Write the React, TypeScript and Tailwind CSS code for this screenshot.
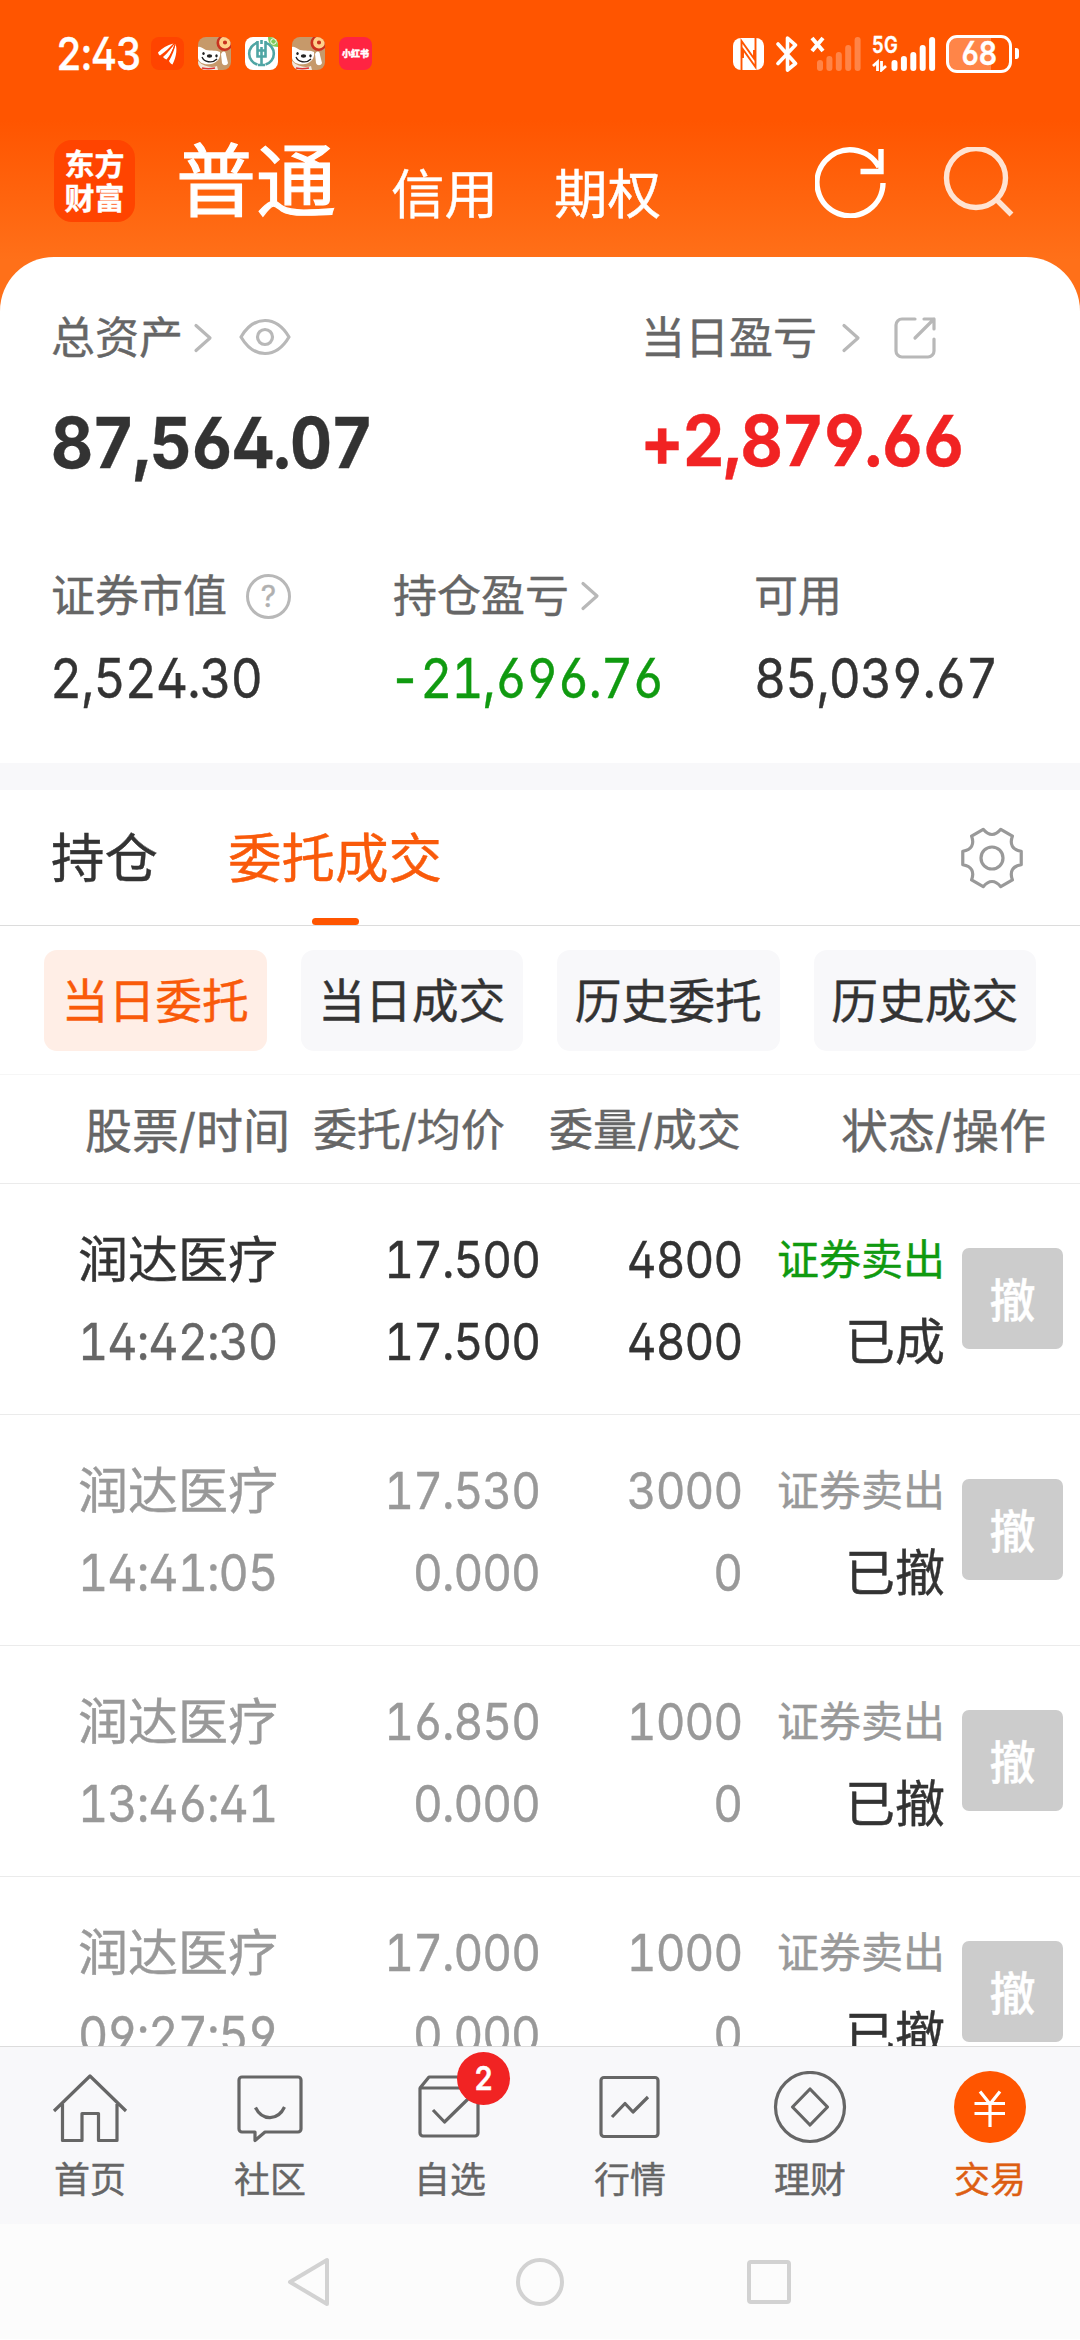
import type { ReactNode } from "react";

function Num({ children, className = "" }: { children: ReactNode; className?: string }) {
  return (
    <span
      className={`inline-block whitespace-nowrap [font-feature-settings:'cv02','cv03','cv04','tnum'] ${className}`}
    >
      {children}
    </span>
  );
}

function Chevron() {
  return (
    <svg className="h-[30px] w-[20px] shrink-0" viewBox="0 0 20 30" fill="none" stroke="#b8b8b8" strokeWidth="3.2" strokeLinecap="round" strokeLinejoin="round">
      <path d="M3 2.5 17 15 3 27.5" />
    </svg>
  );
}

function DogIcon() {
  return (
    <svg className="size-[33px] shrink-0 rounded-[8px]" viewBox="0 0 33 33">
      <rect width="33" height="33" fill="#c6996a" />
      <path d="M0 10C3 9 5 12 8 13 13 14 19 13 22 15c1 6-3 11-9 12C6 28 1 26 0 21Z" fill="#fff" />
      <path d="M23 17c2-4 5-3 5 1l2 8c-1 3-5 3-6 0Z" fill="#fff" />
      <path d="M0 24c6 6 14 7 19 5l1 4H0Z" fill="#f1e6dc" />
      <path d="M4 20c2 5 10 7 15 2" fill="none" stroke="#222" strokeWidth="1.3" />
      <path d="M4 31c4 1 8 1 13 0" stroke="#d33" strokeWidth="1.600" fill="none" />
      <ellipse cx="11.500" cy="19" rx="2.700" ry="1.700" fill="#222" />
      <ellipse cx="5.500" cy="16.500" rx="1.200" ry="1.600" fill="#222" />
      <ellipse cx="18.500" cy="18.800" rx="1.200" ry="1.600" fill="#222" />
      <circle cx="26.500" cy="6" r="8" fill="#c9321f" />
      <circle cx="27" cy="5.500" r="4" fill="none" stroke="#ffd08a" strokeWidth="3.800" />
    </svg>
  );
}

function Bars({ opacity }: { opacity: number }) {
  return (
    <g fill="#fff" opacity={opacity}>
      <rect x="0" y="24" width="6" height="11" rx="3" />
      <rect x="9.400" y="20" width="6" height="15" rx="3" />
      <rect x="18.800" y="16" width="6" height="19" rx="3" />
      <rect x="28.200" y="9" width="6" height="26" rx="3" />
      <rect x="37.600" y="1" width="6" height="34" rx="3" />
    </g>
  );
}

function StatusBar() {
  return (
    <div className="flex h-[107px] items-center pl-[56px] pr-[61px] text-white">
      <div className="w-[95px] text-[45px] font-medium leading-none">
        <Num className="origin-left scale-x-[.89] tracking-[-1px]">2:43</Num>
      </div>
      <div className="flex gap-[14px]">
        <svg className="size-[33px] rounded-[8px]" viewBox="0 0 33 33">
          <rect width="33" height="33" fill="#ff4400" />
          <path d="M7 15.500C11 11 16 8 22.500 6.500 18 11 14 15 9 18.500 8 18 7.500 17 7 15.500Z" fill="#fff" />
          <path d="M12 20C17 15.500 20.500 11 23.500 7 22 13 19 18.500 15.500 22.500 14 22 13 21 12 20Z" fill="#fff" />
          <path d="M18 24C21.500 18 23.500 12.500 24.500 7 26 11 26 19 21.500 27.500 20 27 19 26 18 24Z" fill="#fff" />
          <path d="m11.500 19.500 11.500-12.500M17.300 23.500 24 8" stroke="#ff4400" strokeWidth="1" />
        </svg>
        <DogIcon />
        <svg className="size-[33px] rounded-[8px]" viewBox="0 0 33 33" fill="none">
          <rect width="33" height="33" fill="#fff" />
          <path d="M23 0h10v10c-6 0-10-3-10-10Z" fill="#7fca5a" />
          <circle cx="28.500" cy="4.500" r="2.800" stroke="#fff" />
          <path d="M12.500 5.800a11.300 11.300 0 0 0 0 21.800M20.500 5.800a11.300 11.300 0 0 1 0 21.800" stroke="#4fa5a4" strokeWidth="2.600" />
          <path d="M16.500 10v18M12.500 4v15.500h8V4M12.500 13.500h8M16.500 3v4M13 28h7" stroke="#4fa5a4" strokeWidth="2.600" />
        </svg>
        <DogIcon />
        <div className="flex size-[33px] items-center justify-center rounded-[8px] bg-[#ff2442]">
          <span className="whitespace-nowrap text-[9px] font-black leading-none">小红书</span>
        </div>
      </div>
      <div className="ml-auto flex items-center">
        <svg className="h-[34px] w-[31px]" viewBox="0 0 31 34">
          <rect x="0" y="1" width="31" height="32" rx="8" fill="#fff" />
          <path d="M8.500 34V4L21 21.500V13M22.500 0v30L10 12.500V21" fill="none" stroke="#ff5500" strokeWidth="1.900" />
        </svg>
        <svg className="ml-[12px] h-[36px] w-[22px]" viewBox="0 0 22 36" fill="none" stroke="#fff" strokeWidth="3.600" strokeLinejoin="round" strokeLinecap="round">
          <path d="M2 8 19.500 27.500 11.500 34V2l8 7L2 27.500" />
        </svg>
        <svg className="ml-[12px] h-[36px] w-[52px]" viewBox="0 0 52 36">
          <path d="m2 2 11 13M13 2 2 15" stroke="#fff" strokeWidth="4" />
          <g transform="translate(7 0)">
            <Bars opacity={0.28} />
          </g>
        </svg>
        <div className="relative ml-[10px] h-[36px] w-[64px]">
          <svg className="h-[36px] w-[64px]" viewBox="0 0 64 36">
            <path d="M5.500 35V26L1 30M9.500 25v9l4.500-4" stroke="#fff" strokeWidth="2.800" fill="none" />
            <g transform="translate(19.500 0)">
              <Bars opacity={1} />
            </g>
          </svg>
          <Num className="absolute left-0 top-0 origin-left scale-x-[.8] text-[23px] font-semibold leading-[18px]">5G</Num>
        </div>
        <div className="ml-[10px] flex h-[38px] w-[66px] items-center justify-center rounded-[11px] border-[3px] border-white bg-[linear-gradient(to_right,#ff8548_70%,transparent_70%)] text-[33px] font-semibold leading-none">
          <Num className="scale-x-[.86] tracking-[-0.5px]">68</Num>
        </div>
        <div className="ml-[3px] h-[11px] w-[4px] rounded-r-[3px] bg-white" />
      </div>
    </div>
  );
}

function Header() {
  return (
    <div className="flex h-[150px] items-start pl-[54px] pr-[65px] text-white">
      <div className="mt-[33px] grid h-[82px] w-[81px] place-content-center rounded-[18px] bg-[#ff4400] text-center text-[30px] font-bold leading-[34px]">
        <span>东方</span>
        <span>财富</span>
      </div>
      <span className="ml-[41px] mt-[34px] w-[162px] whitespace-nowrap text-[80px] leading-[80px] [-webkit-text-stroke:1.2px]">普通</span>
      <span className="ml-[53px] mt-[61px] w-[108px] text-[53.500px] leading-[54px]">信用</span>
      <span className="ml-[55px] mt-[61px] w-[108px] text-[53.500px] leading-[54px]">期权</span>
      <svg className="ml-auto mt-[39px] h-[72px] w-[72px]" viewBox="0 0 72 72" fill="none" stroke="#fff" strokeWidth="5.400">
        <path d="M68 37A33 33 0 1 1 64 21M45.500 25.500H66V3" />
      </svg>
      <svg className="ml-[56px] mt-[40px] h-[72px] w-[72px]" viewBox="0 0 72 72" fill="none" stroke="#ffe3d2" strokeWidth="5.400">
        <circle cx="33" cy="31" r="29.500" />
        <path d="m53 52 15.500 15.500" />
      </svg>
    </div>
  );
}

function Assets() {
  return (
    <section className="h-[506px] rounded-t-[54px] bg-white text-[#333]">
      <div className="flex h-[243px] pl-[51px]">
        <div className="w-[590px]">
          <div className="mt-[59px] flex h-[44px] items-center text-[44px] leading-none text-[#666]">
            总资产
            <div className="ml-[10px]"><Chevron /></div>
            <svg className="mb-[2px] ml-[26px] h-[38px] w-[52px]" viewBox="0 0 52 38" fill="none" stroke="#b8b8b8" strokeWidth="3.200">
              <path d="M2 19C15-3 37-3 50 19 37 41 15 41 2 19Z" strokeLinejoin="round" />
              <circle cx="26" cy="19" r="7.500" />
            </svg>
          </div>
          <div className="mt-[49px] text-[70px] font-bold leading-[68px]">
            <Num className="origin-left scale-x-[.93] tracking-[-1px]">87,564.07</Num>
          </div>
        </div>
        <div>
          <div className="mt-[59px] flex h-[44px] items-center text-[44px] leading-none text-[#666]">
            当日盈亏
            <div className="ml-[24px]"><Chevron /></div>
            <svg className="ml-[32px] h-[44px] w-[44px]" viewBox="0 0 44 44" fill="none" stroke="#b8b8b8" strokeWidth="3.200" strokeLinecap="round" strokeLinejoin="round">
              <path d="M22 3H9a6 6 0 0 0-6 6v26a6 6 0 0 0 6 6h26a6 6 0 0 0 6-6V23M31 3h10v10M41 3 22 22" />
            </svg>
          </div>
          <div className="mt-[47px] text-[70px] font-bold leading-[68px] text-[#f12323]">
            <Num className="origin-left scale-x-[.935] tracking-[-1px]">+2,879.66</Num>
          </div>
        </div>
      </div>
      <div className="flex pl-[51px] pt-[74px]">
        <div className="w-[342px]">
          <div className="flex h-[44px] items-center text-[44px] leading-none text-[#666]">
            证券市值
            <div className="ml-[19px] flex size-[45px] items-center justify-center rounded-full border-[3px] border-[#b8b8b8] text-[30px] leading-none text-[#b0b0b0]">?</div>
          </div>
          <div className="mt-[32px] text-[55px] leading-[56px]"><Num className="-ml-px origin-left scale-x-[.9] tracking-[-1px]">2,524.30</Num></div>
        </div>
        <div className="w-[361px]">
          <div className="flex h-[44px] items-center text-[44px] leading-none text-[#666]">
            持仓盈亏
            <div className="ml-[11px]"><Chevron /></div>
          </div>
          <div className="mt-[32px] text-[55px] leading-[56px] text-[#109a10]"><Num className="-ml-[4px] origin-left scale-x-[.9] tracking-[-1px]">-21,696.76</Num></div>
        </div>
        <div>
          <div className="flex h-[44px] items-center text-[44px] leading-none text-[#666]">可用</div>
          <div className="mt-[32px] text-[55px] leading-[56px]"><Num className="origin-left scale-x-[.9] tracking-[-1px]">85,039.67</Num></div>
        </div>
      </div>
    </section>
  );
}

function gearPath() {
  const at = (deg: number, r: number) => {
    const a = (deg * Math.PI) / 180;
    return `${(33 + r * Math.cos(a)).toFixed(2)} ${(33 + r * Math.sin(a)).toFixed(2)}`;
  };
  let d = `M${at(-13, 30)}`;
  for (let i = 0; i < 6; i++) {
    const c = i * 60;
    d += `L${at(c + 13, 30)}C${at(c + 22, 22)} ${at(c + 38, 22)} ${at(c + 47, 30)}`;
  }
  return d + "Z";
}

const filters = ["当日委托", "当日成交", "历史委托", "历史成交"];

function Tabs() {
  return (
    <>
      <div className="flex h-[136px] items-center border-b border-[#dcdcdc] pl-[51px] pr-[55px] text-[53.500px] leading-none text-[#333]">
        <span className="pt-[3px]">持仓</span>
        <div className="relative ml-[70px] flex h-full items-center pt-[3px] text-[#f95a0a]">
          委托成交
          <div className="absolute bottom-0 left-[84px] h-[7px] w-[47px] rounded-full bg-[#ff5500]" />
        </div>
        <svg className="ml-auto size-[66px]" viewBox="0 0 66 66" fill="none" stroke="#999" strokeWidth="3.200" strokeLinejoin="round">
          <path d={gearPath()} />
          <circle cx="33" cy="33" r="11" />
        </svg>
      </div>
      <div className="flex h-[149px] gap-[34px] border-b border-[#f6f6f6] pl-[44px] pt-[24px]">
        {filters.map((f, i) => (
          <div
            key={f}
            className={`flex h-[101px] w-[222.500px] items-center justify-center rounded-[13px] pt-[2px] text-[46.800px] leading-none ${
              i === 0 ? "bg-[#ffeee6] text-[#f95a0a]" : "bg-[#f8f8fa] text-[#333]"
            }`}
          >
            {f}
          </div>
        ))}
      </div>
    </>
  );
}

const orders = [
  { time: "14:42:30", price: "17.500", avg: "17.500", qty: "4800", done: "4800", state: "已成", active: true },
  { time: "14:41:05", price: "17.530", avg: "0.000", qty: "3000", done: "0", state: "已撤", active: false },
  { time: "13:46:41", price: "16.850", avg: "0.000", qty: "1000", done: "0", state: "已撤", active: false },
  { time: "09:27:59", price: "17.000", avg: "0.000", qty: "1000", done: "0", state: "已撤", active: false },
];

function Orders() {
  return (
    <div className="h-[971px] overflow-hidden">
      <div className="flex h-[109px] items-center border-b border-[#ebebeb] pl-[85px] pt-[2px] leading-none text-[#666]">
        <span className="w-[228px] text-[47px]">股票/时间</span>
        <span className="w-[236px] text-[44px]">委托/均价</span>
        <span className="w-[292px] text-[44px]">委量/成交</span>
        <span className="text-[47px]">状态/操作</span>
      </div>
      {orders.map((o) => (
        <div key={o.time} className={`flex h-[231px] border-b border-[#ebebeb] pl-[78px] text-[51px] leading-[52px] ${o.active ? "text-[#333]" : "text-[#999]"}`}>
          <div className="w-[201px] pt-[50px]">
            <div className="text-[50px]">润达医疗</div>
            <div className={`mt-[30px] ${o.active ? "text-[#666]" : ""}`}><Num className="origin-left scale-x-[.915] tracking-[-1px]">{o.time}</Num></div>
          </div>
          <div className="w-[261px] pt-[50px] text-right">
            <div><Num className="origin-right scale-x-[.9] tracking-[-1px]">{o.price}</Num></div>
            <div className="mt-[30px]"><Num className="origin-right scale-x-[.9] tracking-[-1px]">{o.avg}</Num></div>
          </div>
          <div className="w-[202px] pt-[50px] text-right">
            <div><Num className="origin-right scale-x-[.9] tracking-[-1px]">{o.qty}</Num></div>
            <div className="mt-[30px]"><Num className="origin-right scale-x-[.9] tracking-[-1px]">{o.done}</Num></div>
          </div>
          <div className="w-[203px] pt-[50px] text-right">
            <div className={`text-[42px] ${o.active ? "text-[#109a10]" : ""}`}>证券卖出</div>
            <div className="mt-[30px] text-[50px] text-[#333]">{o.state}</div>
          </div>
          <div className="ml-[17px] mt-[64px] flex h-[101px] w-[101px] items-center justify-center rounded-[7px] bg-[#ccc] pt-[2px] text-[46px] font-medium leading-none text-white">撤</div>
        </div>
      ))}
    </div>
  );
}

const navIcons: { label: string; icon: ReactNode }[] = [
  {
    label: "首页",
    icon: <path d="M2 40 38 5l36 35M10.500 33v36.500H30V42.500H46.500V69.500H65V33" />,
  },
  {
    label: "社区",
    icon: (
      <>
        <path d="M10 6H66a3 3 0 0 1 3 3V58a3 3 0 0 1-3 3H33L23 69.500V61H10a3 3 0 0 1-3-3V9a3 3 0 0 1 3-3Z" />
        <path d="M23.500 36.500C30 50 46 50 52.500 36" />
      </>
    ),
  },
  {
    label: "自选",
    icon: <path d="M8 17 17 6H60L66 17M8 17H66V62a3 3 0 0 1-3 3H11a3 3 0 0 1-3-3ZM21 39 32.500 51 56 28" />,
  },
  {
    label: "行情",
    icon: (
      <>
        <rect x="9" y="6.500" width="57" height="59" rx="3" />
        <path d="M20 46 33 32.500 41 41 56 26" />
      </>
    ),
  },
  {
    label: "理财",
    icon: (
      <>
        <circle cx="38" cy="36" r="34.500" />
        <path d="M38 18 55.500 36 38 54 20.500 36Z" />
      </>
    ),
  },
];

function BottomNav() {
  return (
    <nav className="grid h-[178px] grid-cols-6 border-t border-[#dcdcdc] bg-[#f8f8fa] text-[36px] leading-none text-[#666]">
      {navIcons.map((n) => (
        <div key={n.label} className="relative flex flex-col items-center pt-[24px]">
          <svg className="h-[76px] w-[76px]" viewBox="0 0 76 76" fill="none" stroke="#666" strokeWidth="3.200" strokeLinejoin="round">
            {n.icon}
          </svg>
          <span className="mt-[15px]">{n.label}</span>
          {n.label === "自选" && (
            <div className="absolute left-[97px] top-[5px] flex size-[53px] items-center justify-center rounded-full bg-[#f12323] text-[33px] font-semibold text-white">
              <Num className="scale-x-[.88]">2</Num>
            </div>
          )}
        </div>
      ))}
      <div className="flex flex-col items-center pt-[24px] text-[#dd5e12]">
        <svg className="h-[76px] w-[76px]" viewBox="0 0 76 76" fill="none" stroke="#fff" strokeWidth="3.200">
          <circle cx="38" cy="36" r="36" fill="#ff5500" stroke="none" />
          <path d="M28 20.500 38 33 48 20.500M38 33V56M22.500 32.500H53M22.500 42.500H53" />
        </svg>
        <span className="mt-[15px]">交易</span>
      </div>
    </nav>
  );
}

function SystemNav() {
  return (
    <div className="flex h-[115px] items-center bg-[#fcfcfc] pl-[285px]">
      <svg className="h-[52px] w-[48px]" viewBox="0 0 48 52" fill="none" stroke="#d2d2d2" strokeWidth="4" strokeLinejoin="round">
        <path d="M42 4V48L5 26Z" />
      </svg>
      <div className="ml-[183px] size-[48px] rounded-full border-4 border-[#d2d2d2]" />
      <div className="ml-[183px] size-[44px] rounded-[4px] border-4 border-[#d2d2d2]" />
    </div>
  );
}

export default function App() {
  return (
    <main className="flex h-[2340px] w-[1080px] flex-col overflow-hidden bg-white font-['Inter','Noto_Sans_CJK_SC',sans-serif] [-webkit-text-stroke:0.4px]">
      <div className="h-[763px] bg-[linear-gradient(to_bottom,#ff5500_120px,#ff7019_260px,#ff7019)]">
        <StatusBar />
        <Header />
        <Assets />
      </div>
      <div className="h-[27px] bg-[#f8f8fa]" />
      <Tabs />
      <Orders />
      <BottomNav />
      <SystemNav />
    </main>
  );
}
